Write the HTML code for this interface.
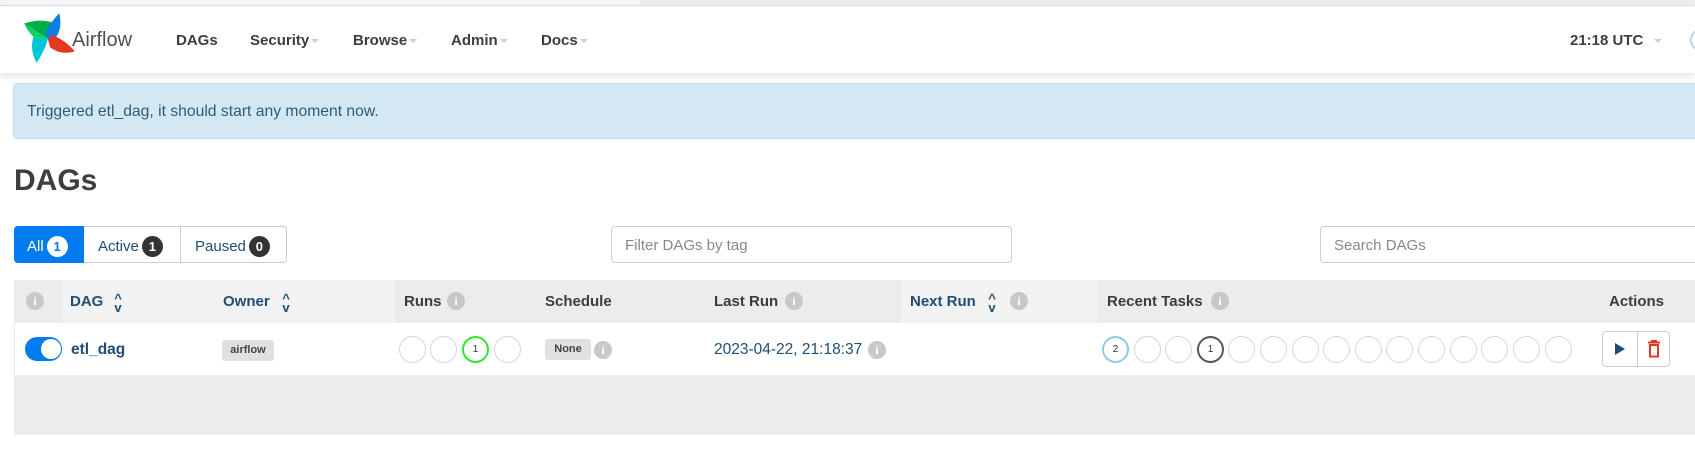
<!DOCTYPE html>
<html><head><meta charset="utf-8"><style>
*{box-sizing:border-box;margin:0;padding:0}
body{width:1695px;height:453px;overflow:hidden;background:#fff;font-family:"Liberation Sans",Arial,sans-serif;position:relative;color:#51504f}
.a{position:absolute;white-space:nowrap}
.nav{font-weight:bold;font-size:15px;color:#3e3e3e;top:32px}
.caret{display:inline-block;width:0;height:0;border-left:4px solid transparent;border-right:4px solid transparent;border-top:4px solid #d9c9d9;margin-left:2px;vertical-align:middle}
.hd{font-weight:bold;font-size:15px;top:293px;color:#3c3c3c}
.lk{color:#204d74}
.info{position:absolute;width:18px;height:18px;border-radius:50%;background:#c8c8c8;color:#fff;font-size:12px;font-weight:bold;text-align:center;line-height:18px;font-family:"Liberation Serif",serif}
.c{position:absolute;width:27px;height:27px;border-radius:50%;border:1px solid #d6d6d6;top:336px;font-size:10px;text-align:center;line-height:25px;color:#333}
.sort{position:absolute;font-size:13px;color:#204d74;line-height:9px;width:12px;text-align:center;font-weight:bold}
.badge{display:inline-block;background:#333;color:#fff;border-radius:50%;width:21px;height:21px;line-height:21px;text-align:center;font-size:13px;font-weight:bold;margin-left:3px}
</style></head><body>
<div class="a" style="left:0;top:0;width:1695px;height:6px;background:#f5f5f7;border-bottom:1px solid #ddd"></div>
<div class="a" style="left:640px;top:0;width:1055px;height:4px;background:#ececef"></div>
<div class="a" style="left:0;top:7px;width:1695px;height:66px;background:#fff;box-shadow:0 3px 8px rgba(0,0,0,.12)"></div>
<svg class="a" style="left:19px;top:9px" width="60" height="60" viewBox="20 10 58 56">
<path d="M48 38 L25 23 Q40 18 52 22 Z" fill="#00ad46"/>
<path d="M48 38 L45 32 Q52 20 59 13 Q62 28 56 36 Z" fill="#0f7ee7"/>
<path d="M48 38 L52 34 Q66 40 74 50 Q60 54 50 46 Z" fill="#e43921"/>
<path d="M48 38 L46 44 Q42 54 37 61 Q30 48 34 36 Z" fill="#00c7d4"/>
<path d="M48 38 L34 36 Q28 30 25 23 Z" fill="#04d659"/>
</svg>
<div class="a" style="left:72px;top:29px;font-size:20px;color:#51504f">Airflow</div>
<div class="a nav" style="left:176px">DAGs</div>
<div class="a nav" style="left:250px">Security<span class="caret"></span></div>
<div class="a nav" style="left:353px">Browse<span class="caret"></span></div>
<div class="a nav" style="left:451px">Admin<span class="caret"></span></div>
<div class="a nav" style="left:541px">Docs<span class="caret"></span></div>
<div class="a nav" style="left:1570px">21:18 UTC <span class="caret" style="margin-left:6px"></span></div>
<div class="a" style="left:1690px;top:28px;width:24px;height:24px;border-radius:50%;border:2px solid #b8d8f0"></div>
<div class="a" style="left:13px;top:83px;width:1700px;height:56px;background:#d4e8f4;border:1px solid #c2def0;border-radius:4px"></div>
<div class="a" style="left:27px;top:103px;font-size:15.7px;color:#2c5c7a">Triggered etl_dag, it should start any moment now.</div>
<div class="a" style="left:14px;top:164px;font-size:30px;font-weight:bold;color:#3e3e3e">DAGs</div>
<div class="a" style="left:14px;top:226px;width:273px;height:37px;border:1px solid #ccc;border-radius:4px;font-size:15px"></div>
<div class="a" style="left:14px;width:70px;height:37px;background:#017cee;border-radius:4px 0 0 4px;color:#fff;font-size:15px;line-height:37px;padding-left:13px;top:226px;padding-top:2px">All<span class="badge" style="background:#fff;color:#017cee">1</span></div>
<div class="a" style="left:84px;top:226px;width:97px;height:37px;border-right:1px solid #ccc;color:#204d74;font-size:15px;line-height:37px;padding-left:14px;padding-top:2px">Active<span class="badge">1</span></div>
<div class="a" style="left:181px;top:226px;width:106px;height:37px;color:#204d74;font-size:15px;line-height:37px;padding-left:14px;padding-top:2px">Paused<span class="badge">0</span></div>
<div class="a" style="left:611px;top:226px;width:401px;height:37px;border:1px solid #ccc;border-radius:4px;font-size:15px;color:#888;line-height:37px;padding-left:13px">Filter DAGs by tag</div>
<div class="a" style="left:1320px;top:226px;width:400px;height:37px;border:1px solid #ccc;border-radius:4px;font-size:15px;color:#888;line-height:37px;padding-left:13px">Search DAGs</div>
<div class="a" style="left:14px;top:280px;width:1690px;height:43px;background:#ececec"></div>
<div class="a" style="left:62px;top:280px;width:333px;height:43px;background:#f2f2f2"></div>
<div class="a" style="left:901px;top:280px;width:196px;height:43px;background:#f2f2f2"></div>
<div class="info" style="left:26px;top:292px">i</div>
<div class="a hd lk" style="left:70px">DAG</div><div class="sort" style="left:112px;top:294px">^<br>v</div>
<div class="a hd lk" style="left:223px">Owner</div><div class="sort" style="left:280px;top:294px">^<br>v</div>
<div class="a hd" style="left:404px">Runs</div><div class="info" style="left:447px;top:292px">i</div>
<div class="a hd" style="left:545px">Schedule</div>
<div class="a hd" style="left:714px">Last Run</div><div class="info" style="left:785px;top:292px">i</div>
<div class="a hd lk" style="left:910px">Next Run</div><div class="sort" style="left:986px;top:294px">^<br>v</div><div class="info" style="left:1010px;top:292px">i</div>
<div class="a hd" style="left:1107px">Recent Tasks</div><div class="info" style="left:1211px;top:292px">i</div>
<div class="a hd" style="left:1609px">Actions</div>
<div class="a" style="left:14px;top:323px;width:1690px;height:52px;background:#fff;border-left:1px solid #e6e6e6"></div>
<div class="a" style="left:14px;top:375px;width:1690px;height:60px;background:#ececec"></div>
<div class="a" style="left:25px;top:337px;width:37px;height:24px;border-radius:12px;background:#017cee"></div>
<div class="a" style="left:41px;top:339px;width:20px;height:20px;border-radius:50%;background:#fff"></div>
<div class="a lk" style="left:71px;top:341px;font-size:15.5px;font-weight:bold">etl_dag</div>
<div class="a" style="left:222px;top:340px;width:52px;height:21px;background:#e0e0e0;border-radius:3px;font-size:11px;font-weight:bold;text-align:center;line-height:21px;color:#444">airflow</div>
<div class="c" style="left:399px;top:336px"></div>
<div class="c" style="left:430px;top:336px"></div>
<div class="c" style="left:462px;top:336px;border:2px solid #2ee82e;line-height:23px">1</div>
<div class="c" style="left:494px;top:336px"></div>
<div class="a" style="left:545px;top:339px;width:46px;height:21px;background:#e0e0e0;border-radius:3px;font-size:11px;font-weight:bold;text-align:center;line-height:21px;color:#444">None</div>
<div class="info" style="left:594px;top:341px">i</div>
<div class="a lk" style="left:714px;top:341px;font-size:15.5px">2023-04-22, 21:18:37</div>
<div class="info" style="left:868px;top:341px">i</div>
<div class="c" style="left:1102px;border:2px solid #8fcbe6;line-height:23px">2</div>
<div class="c" style="left:1134px"></div>
<div class="c" style="left:1165px"></div>
<div class="c" style="left:1197px;border:2px solid #555;line-height:23px">1</div>
<div class="c" style="left:1228px"></div>
<div class="c" style="left:1260px"></div>
<div class="c" style="left:1292px"></div>
<div class="c" style="left:1323px"></div>
<div class="c" style="left:1355px"></div>
<div class="c" style="left:1386px"></div>
<div class="c" style="left:1418px"></div>
<div class="c" style="left:1450px"></div>
<div class="c" style="left:1481px"></div>
<div class="c" style="left:1513px"></div>
<div class="c" style="left:1545px"></div>
<div class="a" style="left:1602px;top:331px;width:68px;height:36px;border:1px solid #ccc;border-radius:4px"></div>
<div class="a" style="left:1637px;top:331px;width:1px;height:36px;background:#ccc"></div>
<svg class="a" style="left:1614px;top:342px" width="12" height="14"><path d="M1 1 L11 7 L1 13 Z" fill="#204d74"/></svg>
<svg class="a" style="left:1648px;top:340px" width="12" height="18"><path d="M0 2.5 H12 M4 2.5 V1 H8 V2.5 M2 5 V16.5 H10 V5 Z" fill="none" stroke="#e43921" stroke-width="2"/></svg>
</body></html>
